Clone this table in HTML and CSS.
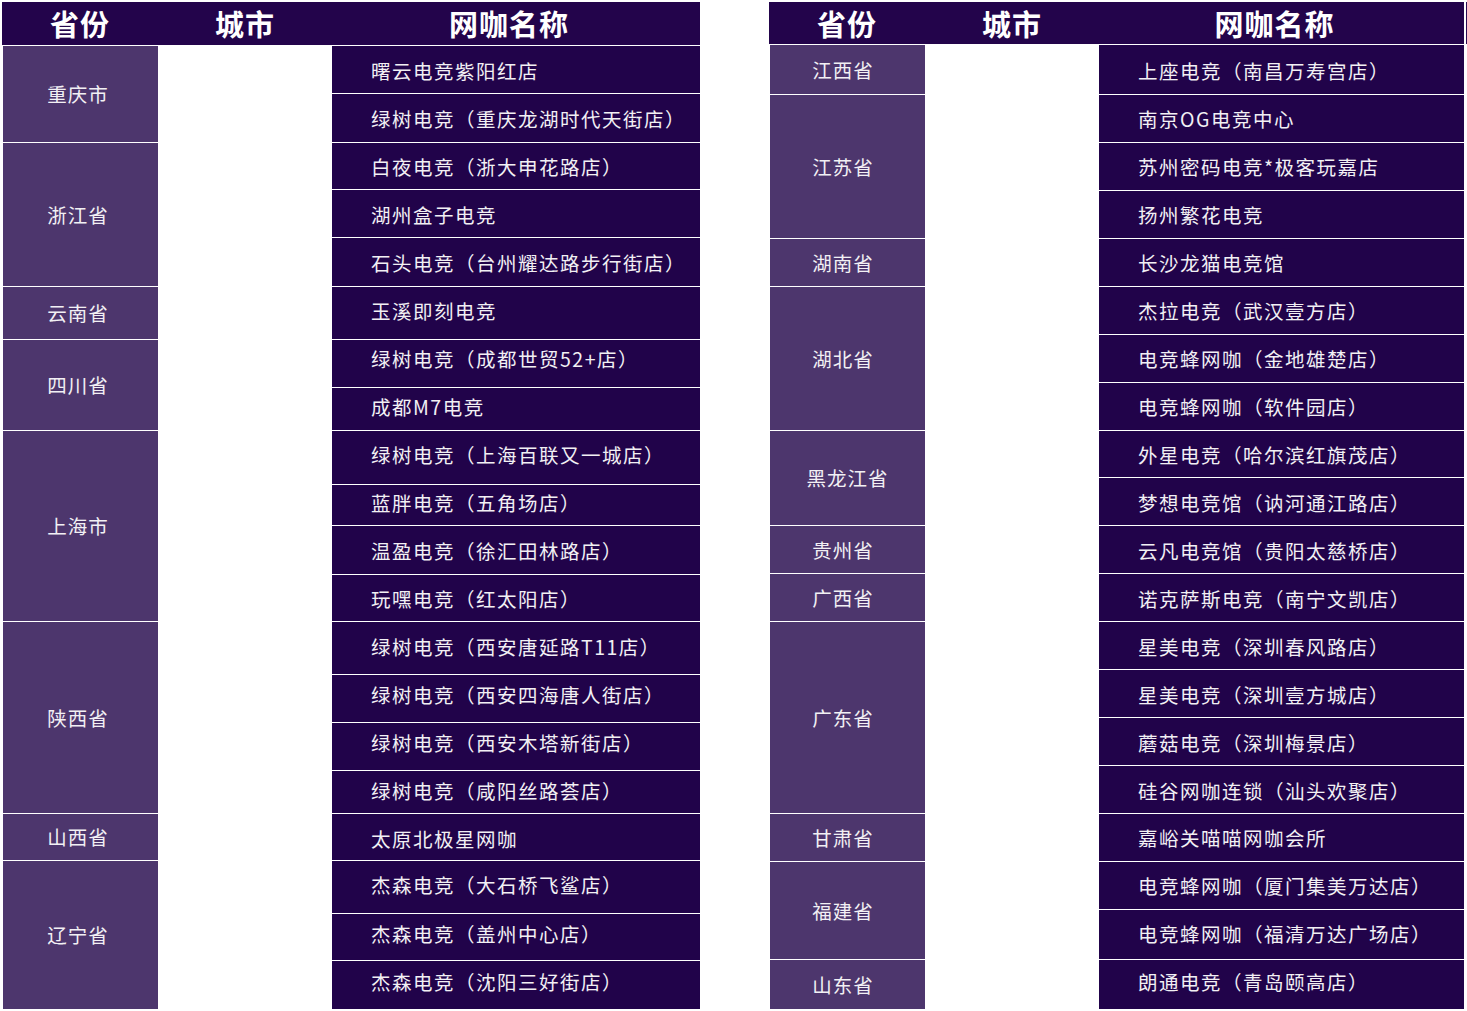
FILE: index.html
```html
<!DOCTYPE html>
<html lang="zh-CN">
<head>
<meta charset="utf-8">
<title>网咖名单</title>
<link rel="stylesheet" href="styles.css">
</head>
<body>
<div class="page">
  <section class="table table-left">
    <div class="thead">
      <div class="th th-prov">省份</div>
      <div class="th th-city">城市</div>
      <div class="th th-name">网咖名称</div>
    </div>
    <div class="tbody">
      <div class="prov r2">重庆市</div>
      <div class="prov r3">浙江省</div>
      <div class="prov">云南省</div>
      <div class="prov r2">四川省</div>
      <div class="prov r4">上海市</div>
      <div class="prov r4">陕西省</div>
      <div class="prov">山西省</div>
      <div class="prov r3">辽宁省</div>

      <div class="name">曙云电竞紫阳红店</div>
      <div class="name">绿树电竞（重庆龙湖时代天街店）</div>
      <div class="name pt14">白夜电竞（浙大申花路店）</div>
      <div class="name">湖州盒子电竞</div>
      <div class="name">石头电竞（台州耀达路步行街店）</div>
      <div class="name pt14">玉溪即刻电竞</div>
      <div class="name pt9">绿树电竞（成都世贸52+店）</div>
      <div class="name pt9">成都M7电竞</div>
      <div class="name pt14">绿树电竞（上海百联又一城店）</div>
      <div class="name pt8">蓝胖电竞（五角场店）</div>
      <div class="name">温盈电竞（徐汇田林路店）</div>
      <div class="name pt14">玩嘿电竞（红太阳店）</div>
      <div class="name">绿树电竞（西安唐延路T11店）</div>
      <div class="name pt10">绿树电竞（西安四海唐人街店）</div>
      <div class="name pt10">绿树电竞（西安木塔新街店）</div>
      <div class="name pt10">绿树电竞（咸阳丝路荟店）</div>
      <div class="name">太原北极星网咖</div>
      <div class="name pt14">杰森电竞（大石桥飞鲨店）</div>
      <div class="name pt10">杰森电竞（盖州中心店）</div>
      <div class="name pt11">杰森电竞（沈阳三好街店）</div>
    </div>
  </section>

  <section class="table table-right">
    <div class="thead">
      <div class="th th-prov">省份</div>
      <div class="th th-city">城市</div>
      <div class="th th-name">网咖名称</div>
    </div>
    <div class="tbody">
      <div class="prov">江西省</div>
      <div class="prov r3">江苏省</div>
      <div class="prov">湖南省</div>
      <div class="prov r3">湖北省</div>
      <div class="prov r2 prov-wide">黑龙江省</div>
      <div class="prov">贵州省</div>
      <div class="prov">广西省</div>
      <div class="prov r4">广东省</div>
      <div class="prov">甘肃省</div>
      <div class="prov r2">福建省</div>
      <div class="prov">山东省</div>

      <div class="name pt16">上座电竞（南昌万寿宫店）</div>
      <div class="name pt14">南京OG电竞中心</div>
      <div class="name pt14">苏州密码电竞*极客玩嘉店</div>
      <div class="name pt14">扬州繁花电竞</div>
      <div class="name pt14">长沙龙猫电竞馆</div>
      <div class="name pt14">杰拉电竞（武汉壹方店）</div>
      <div class="name pt14">电竞蜂网咖（金地雄楚店）</div>
      <div class="name pt14">电竞蜂网咖（软件园店）</div>
      <div class="name pt14">外星电竞（哈尔滨红旗茂店）</div>
      <div class="name">梦想电竞馆（讷河通江路店）</div>
      <div class="name">云凡电竞馆（贵阳太慈桥店）</div>
      <div class="name">诺克萨斯电竞（南宁文凯店）</div>
      <div class="name">星美电竞（深圳春风路店）</div>
      <div class="name">星美电竞（深圳壹方城店）</div>
      <div class="name">蘑菇电竞（深圳梅景店）</div>
      <div class="name">硅谷网咖连锁（汕头欢聚店）</div>
      <div class="name pt14">嘉峪关喵喵网咖会所</div>
      <div class="name pt14">电竞蜂网咖（厦门集美万达店）</div>
      <div class="name pt14">电竞蜂网咖（福清万达广场店）</div>
      <div class="name pt12">朗通电竞（青岛颐高店）</div>
    </div>
  </section>
</div>
</body>
</html>
```

FILE: styles.css
```css
html, body {
  margin: 0;
  padding: 0;
  background: #ffffff;
}

body {
  font-family: "Noto Sans CJK SC", "Noto Sans", sans-serif;
  color: #f2f0f4;
}

.page {
  display: flex;
  align-items: flex-start;
  gap: 69px;
  padding: 2px 0 0 2px;
}

.table {
  display: flex;
  flex-direction: column;
}

.thead {
  display: grid;
  background: #23044b;
  align-items: center;
}

.th {
  font-size: 29px;
  font-weight: 700;
  text-align: center;
  line-height: 1;
  color: #ffffff;
  letter-spacing: 1px;
}

.table-left .thead {
  width: 698px;
  height: 43px;
  grid-template-columns: 156px 174px 368px;
}

.table-right .thead {
  width: 695px;
  height: 42px;
  grid-template-columns: 156px 174px 365px;
  box-shadow: 2px 0 0 0 #ffffff, 3px 0 0 0 #2a0c52;
}

.th-name {
  padding-right: 14px;
}

.tbody {
  display: grid;
  grid-auto-flow: row dense;
  row-gap: 1px;
  margin-top: 1px;
  margin-left: 1px;
}

.table-left .tbody {
  grid-template-columns: 155px 174px 368px;
  grid-template-rows: 47px 48px 46px 47px 48px 52px 47px 42px 53px 40px 48px 46px 52px 47px 47px 42px 46px 52px 46px 48px;
}

.table-right .tbody {
  grid-template-columns: 155px 174px 365px;
  grid-template-rows: 49px 47px 47px 47px 47px 47px 47px 47px 46px 47px 47px 47px 47px 47px 47px 47px 47px 47px 49px 49px;
}

.prov,
.name {
  display: flex;
  font-size: 19.5px;
  line-height: 1;
  box-sizing: border-box;
}

.prov {
  grid-column: 1;
  background: #4d366d;
  align-items: center;
  justify-content: center;
  letter-spacing: 1px;
  padding-right: 5px;
}

.table-right .prov {
  padding-right: 9px;
}

.table-right .prov-wide {
  padding-right: 0;
}

.name {
  grid-column: 3;
  background: #21034a;
  align-items: flex-start;
  padding-left: 39px;
  padding-top: 15px;
  letter-spacing: 1.5px;
  white-space: nowrap;
}

.name.pt8  { padding-top: 8px; }
.name.pt9  { padding-top: 9px; }
.name.pt10 { padding-top: 10px; }
.name.pt11 { padding-top: 11px; }
.name.pt12 { padding-top: 12px; }
.name.pt14 { padding-top: 14px; }
.name.pt16 { padding-top: 16px; }

.r2 { grid-row: span 2; }
.r3 { grid-row: span 3; }
.r4 { grid-row: span 4; }
```
